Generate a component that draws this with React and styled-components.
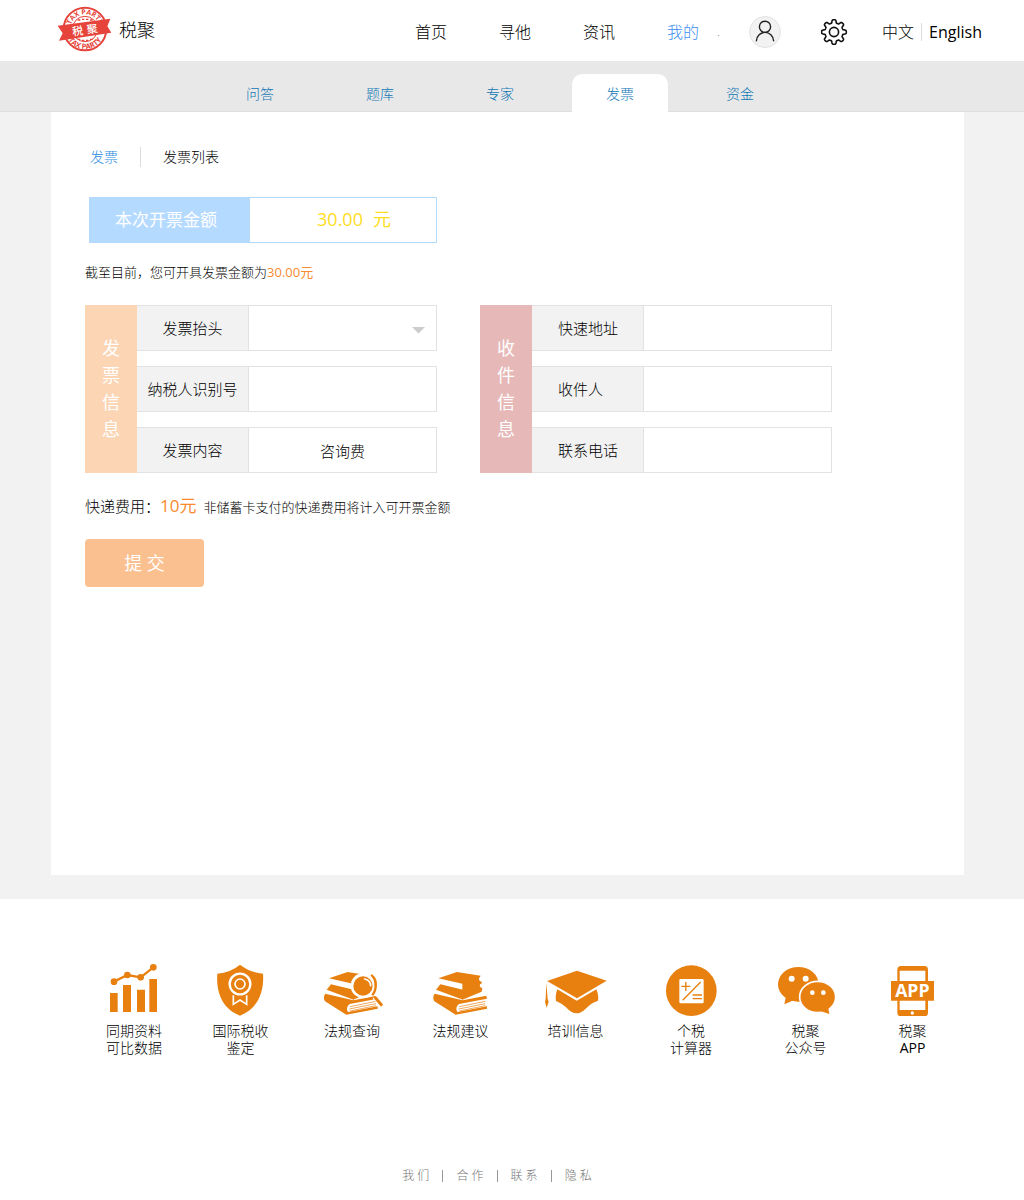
import React from "react";
import styled, { createGlobalStyle } from "styled-components";

const ORANGE = "#e8800f";

const GlobalStyle = createGlobalStyle`
  *, *::before, *::after { box-sizing: border-box; }
  body {
    margin: 0;
    background: #f2f2f2;
    color: #000;
    font-family: "Open Sans", "Noto Sans CJK SC", sans-serif;
    font-size: 14px;
    font-weight: 300;
  }
  a { color: inherit; text-decoration: none; }
  input, select, button { font: inherit; color: inherit; }
`;

const Page = styled.div`
  display: flex;
  flex-direction: column;
  min-height: 100vh;
`;

const Header = styled.header`
  display: flex;
  align-items: center;
  height: 61px;
  padding: 3px 42px 0 57px;
  background: #fff;
  font-size: 16px;
`;

const Brand = styled.a`
  display: flex;
  align-items: center;
  gap: 7px;
  padding-bottom: 6px;
  font-size: 18px;
`;

const MainNav = styled.nav`
  display: flex;
  gap: 52px;
  margin-left: auto;
`;

const NavLink = styled.a`
  line-height: 24px;
  color: ${(p) => (p.$active ? "#3c8ff0" : "#000")};
`;

const Dot = styled.span`
  width: 32px;
  margin-left: 18px;
  color: #777;
  font-size: 12px;
  line-height: 24px;
`;

const IconButton = styled.button`
  display: flex;
  align-items: center;
  justify-content: center;
  width: 32px;
  height: 32px;
  padding: 0;
  border: ${(p) => (p.$round ? "1px solid #e2e2e2" : "0")};
  border-radius: 50%;
  background: ${(p) => (p.$round ? "#f2f2f2" : "none")};
`;

const Tools = styled.div`
  display: flex;
  align-items: center;
  gap: 37px;
`;

const Languages = styled.div`
  display: flex;
  align-items: center;
  margin-left: 32px;
  line-height: 24px;
`;

const Language = styled.a`
  font-weight: ${(p) => (p.lang === "en" ? 400 : 300)};
`;

const Divider = styled.span`
  width: 1px;
  height: ${(p) => p.$height}px;
  margin: 0 ${(p) => p.$space}px;
  background: ${(p) => p.$color || "#dcdcdc"};
`;

const SubNav = styled.nav`
  display: flex;
  align-items: flex-end;
  gap: 24px;
  height: 51px;
  padding-left: 212px;
  background: #e8e8e8;
  box-shadow: inset 0 -1px 0 #dfdfdf;
`;

const Tab = styled.a`
  width: 96px;
  height: 38px;
  border-radius: 10px 10px 0 0;
  background: ${(p) => (p.$active ? "#fff" : "transparent")};
  color: #0f76b4;
  line-height: 40px;
  text-align: center;
`;

const Content = styled.main`
  min-height: 763px;
  margin: 0 60px 24px 51px;
  padding: 35px 34px 40px;
  background: #fff;
`;

const Crumbs = styled.div`
  display: flex;
  align-items: center;
  height: 20px;
  margin-left: 5px;
`;

const Crumb = styled.a`
  line-height: 20px;
  color: ${(p) => (p.$active ? "#2a8ae0" : "#000")};
`;

const Amount = styled.div`
  display: flex;
  width: 348px;
  max-width: 100%;
  height: 46px;
  margin: 30px 0 19px 4px;
  border: 1px solid #b5daff;
  line-height: 44px;
`;

const AmountLabel = styled.span`
  width: 160px;
  padding-left: 25px;
  background: #b5daff;
  color: #fff;
  font-size: 17px;
  font-weight: 400;
`;

const AmountValue = styled.output`
  display: flex;
  flex: 1;
  justify-content: center;
  gap: 10px;
  padding-left: 22px;
  color: #ffdd22;
  font-size: 18px;
  font-weight: 400;
  line-height: 42px;
`;

const Hint = styled.p`
  margin: 0;
  font-size: 13px;
  line-height: 20px;
`;

const Accent = styled.span`
  color: #f98a30;
  font-size: ${(p) => (p.$large ? 17 : 13)}px;
  font-weight: 400;
`;

const Groups = styled.div`
  display: flex;
  gap: 43px;
  margin-top: 23px;
`;

const Group = styled.section`
  display: flex;
  flex: 0 1 352px;
  min-width: 0;
  height: 168px;
`;

const GroupTitle = styled.h2`
  display: flex;
  flex-direction: column;
  flex: none;
  align-items: center;
  justify-content: center;
  width: 52px;
  margin: 0;
  background: ${(p) => p.$color};
  color: #fff;
  font-size: 18px;
  font-weight: 400;
  line-height: 27px;
`;

const Rows = styled.div`
  display: flex;
  flex: 1;
  flex-direction: column;
  justify-content: space-between;
  min-width: 0;
`;

const Row = styled.div`
  position: relative;
  display: flex;
  height: 46px;
  border: 1px solid #e2e2e2;
  border-left: 0;
  font-size: 15px;
`;

const RowLabel = styled.label`
  flex: none;
  width: 112px;
  padding-left: ${(p) => (p.$left ? 26 : 0)}px;
  border-right: 1px solid #e2e2e2;
  background: #f2f2f2;
  line-height: 44px;
  text-align: ${(p) => (p.$left ? "left" : "center")};
`;

const Field = styled.input`
  flex: 1;
  min-width: 0;
  padding: 0 12px;
  border: 0;
  background: #fff;
  text-align: center;
`;

const Select = styled.select`
  flex: 1;
  min-width: 0;
  padding: 0 32px 0 12px;
  border: 0;
  background: #fff;
  appearance: none;
`;

const Caret = styled.svg`
  position: absolute;
  top: 21px;
  right: 11px;
  pointer-events: none;
`;

const Fee = styled.p`
  display: flex;
  align-items: baseline;
  height: 26px;
  margin: 20px 0;
  font-size: 15px;
  line-height: 26px;
`;

const FeeNote = styled.span`
  margin-left: 7px;
  font-size: 13px;
`;

const Submit = styled.button`
  width: 119px;
  height: 48px;
  padding: 0 0 2px;
  border: 0;
  border-radius: 4px;
  background: #fbc090;
  color: #fff;
  font-size: 18px;
  font-weight: 400;
`;

const Footer = styled.footer`
  flex: 1;
  padding: 65px 0 16px;
  background: #fff;
`;

const Services = styled.div`
  display: grid;
  grid-template-columns: 104fr 109fr 114fr 103fr 127fr 104fr 125fr 89fr;
  padding: 0 67px 0 82px;
`;

const Service = styled.a`
  display: flex;
  flex-direction: column;
  align-items: center;
  gap: 6px;
  min-height: 93px;
  line-height: 17px;
  text-align: center;
`;

const ServiceLine = styled.span`
  display: block;
  font-weight: ${(p) => (p.$latin ? 400 : 300)};
`;

const FooterLinks = styled.div`
  display: flex;
  align-items: center;
  justify-content: center;
  margin: 110px 30px 0 0;
  color: #777;
  font-size: 12px;
  line-height: 18px;
`;

function Logo() {
  return (
    <svg width="55" height="46" viewBox="0 0 165 138" aria-hidden="true">
      <defs>
        <path id="arcTop" d="M40 69a44 44 0 0 1 88 0" />
        <path id="arcBottom" d="M24 69a60 60 0 0 0 120 0" />
      </defs>
      <circle cx="84" cy="69" r="64" fill="#fff" stroke="#e6433a" strokeWidth="6" />
      <circle cx="84" cy="69" r="38" fill="#fff" stroke="#e6433a" strokeWidth="3" />
      <g fill="#e6433a" fontFamily="Open Sans, sans-serif" fontWeight="700" textAnchor="middle">
        <text fontSize="21"><textPath href="#arcTop" startOffset="50%">TAX PARTY</textPath></text>
        <text fontSize="22"><textPath href="#arcBottom" startOffset="50%">TAX PARTY</textPath></text>
      </g>
      <path d="M62 42h8m5-2h7m5 0h7m5 2h8M62 100h8m5 3h7m5 0h7m5-3h8" stroke="#e6433a" strokeWidth="4" />
      <path d="M2 59L160 38L151 61L163 80L6 104L17 82Z" fill="#e6433a" />
      <g fill="#fff" fontFamily="Noto Sans CJK SC, sans-serif" fontSize="33" fontWeight="500" transform="rotate(-8 84 71)">
        <text x="45" y="84">税</text>
        <text x="89" y="84">聚</text>
      </g>
    </svg>
  );
}

function PersonIcon() {
  return (
    <svg width="30" height="30" viewBox="1 1 30 30" fill="none" stroke="#222" strokeWidth="1.4" strokeLinecap="round" aria-hidden="true">
      <circle cx="16" cy="10.8" r="5.6" />
      <path d="M7.4 24.8c.4-5 4-8.4 8.6-8.4s8.200 3.400 8.600 8.400" />
    </svg>
  );
}

const gearOutline = Array.from({ length: 160 }, (_, i) => {
  const a = (i / 160) * Math.PI * 2;
  const r = 10.7 + (1.6 * Math.tanh(2.4 * Math.cos(8 * a))) / Math.tanh(2.4);
  return `${(15 + r * Math.sin(a)).toFixed(2)},${(15 - r * Math.cos(a)).toFixed(2)}`;
}).join(" ");

function GearIcon() {
  return (
    <svg width="30" height="30" viewBox="0 0 30 30" fill="none" stroke="#111" strokeWidth="1.6" strokeLinejoin="round" aria-hidden="true">
      <polygon points={gearOutline} />
      <circle cx="15" cy="15" r="4.6" />
    </svg>
  );
}

function ServiceIcon({ left, children }) {
  return (
    <svg width="64" height="52" viewBox={`${left} 42 192 156`} fill={ORANGE} aria-hidden="true">
      {children}
    </svg>
  );
}

function Books() {
  return (
    <>
      <path d="M57 85L113 66L184 77Q178 84 179 89Q181 93 187 96L188 99Q181 103 181 107Q182 112 189 115L187 125L129 149V101Z" />
      <path d="M63 103L131 119V149L50 119Z" />
      <path d="M46 131L130 151L201 137L203 146L119 162Q106 173 114 186L203 169V176L109 194L45 154Q38 142 46 131Z" />
      <path d="M120 170L198 154M118 177L198 161M120 183L198 167" stroke={ORANGE} strokeWidth="2" />
    </>
  );
}

const icons = {
  chart: (
    <ServiceIcon left={36}>
      <path d="M60 129h23v57H60zM99 105h24v81H99zM141 119h24v67h-24zM178 87h23v99h-23z" />
      <path d="M72 95L112 75L152 82L190 52" fill="none" stroke={ORANGE} strokeWidth="7" />
      <circle cx="72" cy="95" r="10" />
      <circle cx="112" cy="75" r="10" />
      <circle cx="152" cy="82" r="10" />
      <circle cx="190" cy="52" r="10" />
    </ServiceIcon>
  ),
  shield: (
    <ServiceIcon left={356}>
      <path d="M449 44Q480 68 518 71C522 122 505 176 449 197C393 176 377 122 381 71Q420 68 449 44Z" />
      <g fill="none" stroke="#fff">
        <circle cx="449" cy="102" r="31" strokeWidth="7" />
        <circle cx="449" cy="102" r="15" strokeWidth="5" />
        <path d="M429 136V163L449 150L469 163V136" strokeWidth="5" />
      </g>
    </ServiceIcon>
  ),
  search: (
    <ServiceIcon left={30}>
      <Books />
      <circle cx="160" cy="107" r="38" fill="#fff" />
      <path d="M185 72Q201 82 201 103Q201 124 190 138L184 134Q195 120 193 102Q193 88 182 77Z" />
      <circle cx="159" cy="108" r="29" />
      <path d="M164 87Q181 90 182 107" fill="none" stroke="#fff" strokeWidth="5" strokeLinecap="round" />
      <path d="M194 140L215 164" stroke="#fff" strokeWidth="16" />
      <path d="M196 143L214 164" stroke={ORANGE} strokeWidth="9" strokeLinecap="round" />
    </ServiceIcon>
  ),
  books: (
    <ServiceIcon left={29}>
      <Books />
    </ServiceIcon>
  ),
  cap: (
    <ServiceIcon left={41}>
      <path d="M50 93L140 62L229 92L140 145Z" />
      <path d="M81 118L139 152L198 118Q206 135 203 152Q185 157 166 176Q139 203 113 178Q96 160 77 153Q74 134 81 118Z" />
      <path d="M48 98L52 147L55 155L49 173L44 155L46 147Z" />
    </ServiceIcon>
  ),
  calculator: (
    <ServiceIcon left={387}>
      <circle cx="484" cy="122" r="76" />
      <rect x="448" y="87" width="73" height="73" rx="4" fill="#fff" />
      <path d="M454 109h27M467.500 96v27M458 151L512 96M488 135h28M488 146h28" fill="none" stroke={ORANGE} strokeWidth="4" />
    </ServiceIcon>
  ),
  wechat: (
    <ServiceIcon left={41}>
      <ellipse cx="114" cy="103" rx="61" ry="52" />
      <path d="M77 138L72 163L102 150Z" />
      <ellipse cx="172" cy="141" rx="54" ry="47" stroke="#fff" strokeWidth="5" />
      <path d="M182 184L207 192L203 170Z" />
      <g fill="#fff">
        <circle cx="94" cy="86" r="9" />
        <circle cx="136" cy="86" r="9" />
        <circle cx="156" cy="128" r="7" />
        <circle cx="189" cy="128" r="7" />
      </g>
    </ServiceIcon>
  ),
  phone: (
    <ServiceIcon left={362}>
      <rect x="411" y="48" width="92" height="151" rx="11" />
      <path d="M418 62h77v118h-77z" fill="#fff" />
      <path d="M392 93h129v59H392z" />
      <circle cx="456" cy="189" r="5" fill="#fff" />
      <text x="456" y="141" fill="#fff" fontFamily="Open Sans, sans-serif" fontSize="53" fontWeight="700" textAnchor="middle">APP</text>
    </ServiceIcon>
  ),
};

const services = [
  ["chart", ["同期资料", "可比数据"]],
  ["shield", ["国际税收", "鉴定"]],
  ["search", ["法规查询"]],
  ["books", ["法规建议"]],
  ["cap", ["培训信息"]],
  ["calculator", ["个税", "计算器"]],
  ["wechat", ["税聚", "公众号"]],
  ["phone", ["税聚", "APP"]],
];

function FieldRow({ id, label, left, value = "" }) {
  return (
    <Row>
      <RowLabel htmlFor={id} $left={left}>{label}</RowLabel>
      <Field id={id} type="text" defaultValue={value} />
    </Row>
  );
}

function VerticalTitle({ text, color }) {
  return (
    <GroupTitle $color={color}>
      {[...text].map((c) => <span key={c}>{c}</span>)}
    </GroupTitle>
  );
}

export default function App() {
  return (
    <Page>
      <GlobalStyle />
      <Header>
        <Brand href="#"><Logo />税聚</Brand>
        <MainNav>
          {["首页", "寻他", "资讯", "我的"].map((t) => (
            <NavLink key={t} href="#" $active={t === "我的"}>{t}</NavLink>
          ))}
        </MainNav>
        <Dot>.</Dot>
        <Tools>
          <IconButton type="button" aria-label="个人中心" $round><PersonIcon /></IconButton>
          <IconButton type="button" aria-label="设置"><GearIcon /></IconButton>
        </Tools>
        <Languages>
          <Language href="#" lang="zh">中文</Language>
          <Divider $height={18} $space={7} />
          <Language href="#" lang="en">English</Language>
        </Languages>
      </Header>

      <SubNav>
        {["问答", "题库", "专家", "发票", "资金"].map((t) => (
          <Tab key={t} href="#" $active={t === "发票"}>{t}</Tab>
        ))}
      </SubNav>

      <Content>
        <Crumbs>
          <Crumb href="#" $active>发票</Crumb>
          <Divider $height={20} $space={22} />
          <Crumb href="#">发票列表</Crumb>
        </Crumbs>

        <Amount>
          <AmountLabel>本次开票金额</AmountLabel>
          <AmountValue><span>30.00</span><span>元</span></AmountValue>
        </Amount>
        <Hint>截至目前，您可开具发票金额为<Accent>30.00元</Accent></Hint>

        <Groups>
          <Group>
            <VerticalTitle text="发票信息" color="#fcd5b4" />
            <Rows>
              <Row>
                <RowLabel htmlFor="title">发票抬头</RowLabel>
                <Select id="title" defaultValue=""><option value="" /></Select>
                <Caret width="13" height="7" viewBox="0 0 13 7" aria-hidden="true">
                  <path d="M0 0h13L6.500 6.500z" fill="#ccc" />
                </Caret>
              </Row>
              <FieldRow id="taxpayer" label="纳税人识别号" />
              <FieldRow id="subject" label="发票内容" value="咨询费" />
            </Rows>
          </Group>
          <Group>
            <VerticalTitle text="收件信息" color="#e6b8b8" />
            <Rows>
              <FieldRow id="address" label="快速地址" left />
              <FieldRow id="recipient" label="收件人" left />
              <FieldRow id="phone" label="联系电话" left />
            </Rows>
          </Group>
        </Groups>

        <Fee>
          快递费用：<Accent $large>10元</Accent>
          <FeeNote>非储蓄卡支付的快递费用将计入可开票金额</FeeNote>
        </Fee>
        <Submit type="button">提 交</Submit>
      </Content>

      <Footer>
        <Services>
          {services.map(([icon, lines]) => (
            <Service key={icon} href="#">
              {icons[icon]}
              <span>
                {lines.map((line) => (
                  <ServiceLine key={line} $latin={line === "APP"}>{line}</ServiceLine>
                ))}
              </span>
            </Service>
          ))}
        </Services>
        <FooterLinks>
          {["我 们", "合 作", "联 系", "隐 私"].map((t, i) => (
            <React.Fragment key={t}>
              {i > 0 && <Divider $height={12} $space={13} $color="#999" />}
              <a href="#">{t}</a>
            </React.Fragment>
          ))}
        </FooterLinks>
      </Footer>
    </Page>
  );
}
